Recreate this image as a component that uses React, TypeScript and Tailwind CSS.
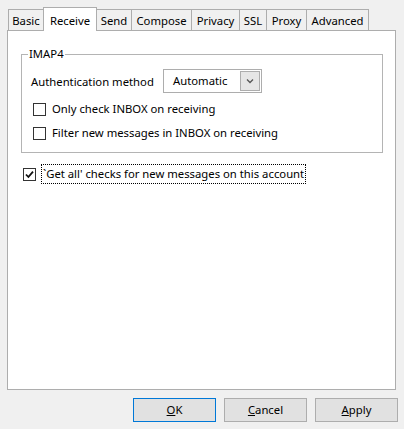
import React from "react";

const tabs = ["Basic", "Receive", "Send", "Compose", "Privacy", "SSL", "Proxy", "Advanced"];
const widths: Record<string, string> = {
  Basic: "w-[36px]",
  Receive: "w-[54px]",
  Send: "w-[36px]",
  Compose: "w-[61px]",
  Privacy: "w-[49px]",
  SSL: "w-[28px]",
  Proxy: "w-[41px]",
  Advanced: "w-[63px]",
};

function Check({ checked }: { checked?: boolean }) {
  return (
    <span className="flex h-[13px] w-[13px] shrink-0 items-center justify-center border border-[#333333] bg-white">
      {checked && (
        <svg width="9" height="9" viewBox="0 0 9 9">
          <path d="M1 4.5 L3.4 7 L8 1.6" stroke="#111" strokeWidth="1.8" fill="none" />
        </svg>
      )}
    </span>
  );
}

export default function App() {
  return (
    <div className="flex h-[429px] w-[404px] flex-col bg-[#f0f0f0] pt-[7px] font-['Noto_Sans',sans-serif] text-[11.3px] leading-[16px] text-black">
      <div className="flex h-[23px] items-end pl-[9px]">
        {tabs.map((t) => {
          const sel = t === "Receive";
          return (
            <div
              key={t}
              className={
                sel
                  ? `relative z-10 -mb-px -ml-px flex h-[24px] items-start justify-center border border-b-0 border-[#adadad] bg-white pt-[5px] ${widths[t]}`
                  : `-ml-px flex h-[21px] items-center justify-center border border-b-0 border-[#adadad] bg-[#f0f0f0] pt-[2px] ${widths[t]}`
              }
            >
              {t}
            </div>
          );
        })}
      </div>
      <div className="ml-[7px] flex h-[360px] w-[389px] flex-col border border-[#adadad] bg-white pl-[13px] pt-[23px]">
        <div className="relative flex h-[99px] w-[362px] flex-col border border-[#b4b4b4] pl-[9px] pt-[14px]">
          <span className="absolute -top-[9px] left-[6px] bg-white px-[1px]">IMAP4</span>
          <div className="flex h-[24px] items-center">
            <span className="w-[132px] pt-[1px]">Authentication method</span>
            <div className="flex h-[24px] w-[99px] items-center border border-[#adadad] bg-white p-[1px]">
              <span className="flex-1 pl-[8px]">Automatic</span>
              <span className="flex h-full w-[20px] items-center justify-center border border-[#adadad] bg-[#e6e6e6]">
                <svg width="8" height="6" viewBox="0 0 8 6">
                  <path d="M1 1.5 L4 4.5 L7 1.5" stroke="#555" strokeWidth="1.3" fill="none" />
                </svg>
              </span>
            </div>
          </div>
          <div className="mt-[4px] flex h-[24px] items-center pl-[2px]">
            <Check />
            <span className="ml-[6px]">Only check INBOX on receiving</span>
          </div>
          <div className="flex h-[24px] items-center pl-[2px]">
            <Check />
            <span className="ml-[6px]">Filter new messages in INBOX on receiving</span>
          </div>
        </div>
        <div className="mt-[9px] flex h-[24px] items-center pl-[2px]">
          <Check checked />
          <span className="ml-[5px] border border-dotted border-black px-[1px] py-[1px]">
            `Get all' checks for new messages on this account
          </span>
        </div>
      </div>
      <div className="mt-[8px] flex gap-[8px] pl-[133px]">
        <button className="h-[24px] w-[83px] border border-[#0078d7] bg-[#e1e1e1]">
          <u>O</u>K
        </button>
        <button className="h-[24px] w-[83px] border border-[#adadad] bg-[#e1e1e1]">
          <u>C</u>ancel
        </button>
        <button className="h-[24px] w-[83px] border border-[#adadad] bg-[#e1e1e1]">
          <u>A</u>pply
        </button>
      </div>
    </div>
  );
}
